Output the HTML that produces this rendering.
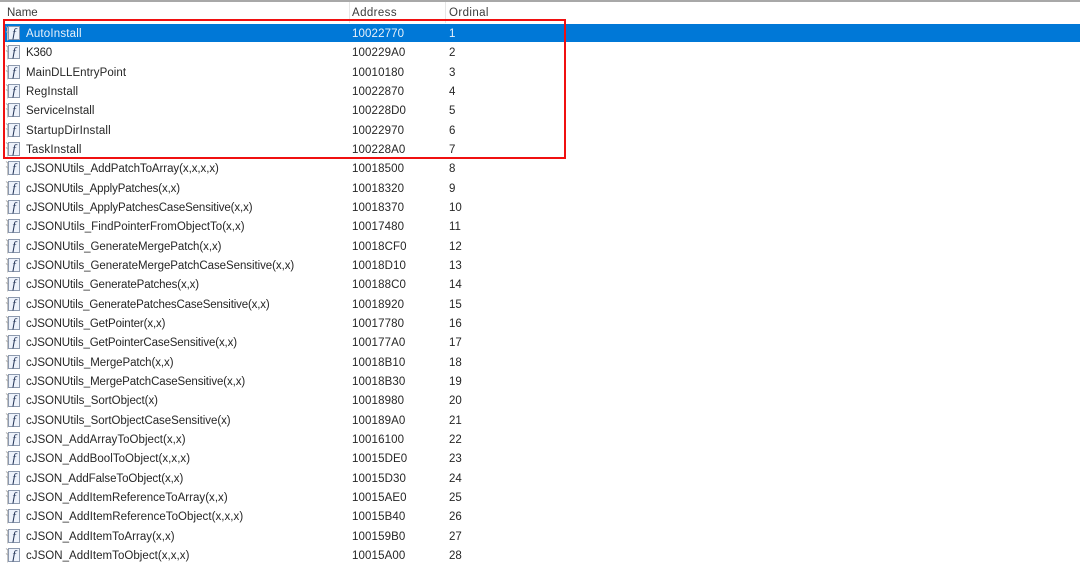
<!DOCTYPE html>
<html><head><meta charset="utf-8"><style>
html,body{margin:0;padding:0;background:#fff}
#p{position:relative;width:1080px;height:564px;overflow:hidden;background:#fff;font:11.5px/19px "Liberation Sans","Noto Sans CJK SC",sans-serif;color:#262626}
.top{position:absolute;left:0;top:0;width:1080px;height:2px;background:#a8a8a8}
.h{position:absolute;top:4px;color:#3a3a3a;white-space:nowrap;letter-spacing:.4px}
.v{position:absolute;top:2px;width:1px;height:21px;background:#e6e6e6}
.sel{position:absolute;left:3px;top:24px;width:1077px;height:18px;background:#0078d7}
.r{position:absolute;left:0;width:1080px;height:19px}
.r span{position:absolute;top:1px;white-space:nowrap}
.n{left:26px}.a{left:352px;letter-spacing:.12px}.o{left:449px}
.r svg{position:absolute;left:5px;top:1px}
.w span{color:#e8f2fb}
.box{position:absolute;left:3px;top:19px;width:559px;height:136px;border:2px solid #f01010}
</style></head><body><div id="p">
<svg width="0" height="0" style="position:absolute"><defs><g id="i"><path d="M2.5 2V15.5" stroke="#c4c4c4" fill="none"/><path d="M3 3L1 1.5M3 8L1 6.5" stroke="#aaa" fill="none"/><rect x="3.5" y="1.5" width="11" height="13" fill="#edf2fb" stroke="#8c99ae"/><text x="9" y="12" font-family="Liberation Serif" font-style="italic" font-size="13" text-anchor="middle" fill="#26375a">f</text></g></defs></svg>
<div class="top"></div>
<div class="h" style="left:7px;letter-spacing:0">Name</div><div class="h" style="left:352px">Address</div><div class="h" style="left:449px">Ordinal</div>
<div class="v" style="left:349px"></div><div class="v" style="left:445px"></div>
<div class="sel"></div>
<div class="r w" style="top:24px"><svg width="16" height="17"><use href="#i"/></svg><span class="n" style="letter-spacing:.18px">AutoInstall</span><span class="a">10022770</span><span class="o">1</span></div>
<div class="r" style="top:43px"><svg width="16" height="17"><use href="#i"/></svg><span class="n" style="letter-spacing:-.25px">K360</span><span class="a">100229A0</span><span class="o">2</span></div>
<div class="r" style="top:63px"><svg width="16" height="17"><use href="#i"/></svg><span class="n" style="letter-spacing:.06px">MainDLLEntryPoint</span><span class="a">10010180</span><span class="o">3</span></div>
<div class="r" style="top:82px"><svg width="16" height="17"><use href="#i"/></svg><span class="n" style="letter-spacing:.1px">RegInstall</span><span class="a">10022870</span><span class="o">4</span></div>
<div class="r" style="top:101px"><svg width="16" height="17"><use href="#i"/></svg><span class="n">ServiceInstall</span><span class="a">100228D0</span><span class="o">5</span></div>
<div class="r" style="top:121px"><svg width="16" height="17"><use href="#i"/></svg><span class="n" style="letter-spacing:.18px">StartupDirInstall</span><span class="a">10022970</span><span class="o">6</span></div>
<div class="r" style="top:140px"><svg width="16" height="17"><use href="#i"/></svg><span class="n" style="letter-spacing:.18px">TaskInstall</span><span class="a">100228A0</span><span class="o">7</span></div>
<div class="r" style="top:159px"><svg width="16" height="17"><use href="#i"/></svg><span class="n" style="letter-spacing:-.06px">cJSONUtils_AddPatchToArray(x,x,x,x)</span><span class="a">10018500</span><span class="o">8</span></div>
<div class="r" style="top:179px"><svg width="16" height="17"><use href="#i"/></svg><span class="n" style="letter-spacing:-.14px">cJSONUtils_ApplyPatches(x,x)</span><span class="a">10018320</span><span class="o">9</span></div>
<div class="r" style="top:198px"><svg width="16" height="17"><use href="#i"/></svg><span class="n" style="letter-spacing:-.12px">cJSONUtils_ApplyPatchesCaseSensitive(x,x)</span><span class="a">10018370</span><span class="o">10</span></div>
<div class="r" style="top:217px"><svg width="16" height="17"><use href="#i"/></svg><span class="n">cJSONUtils_FindPointerFromObjectTo(x,x)</span><span class="a">10017480</span><span class="o">11</span></div>
<div class="r" style="top:237px"><svg width="16" height="17"><use href="#i"/></svg><span class="n" style="letter-spacing:-.06px">cJSONUtils_GenerateMergePatch(x,x)</span><span class="a">10018CF0</span><span class="o">12</span></div>
<div class="r" style="top:256px"><svg width="16" height="17"><use href="#i"/></svg><span class="n" style="letter-spacing:-.06px">cJSONUtils_GenerateMergePatchCaseSensitive(x,x)</span><span class="a">10018D10</span><span class="o">13</span></div>
<div class="r" style="top:275px"><svg width="16" height="17"><use href="#i"/></svg><span class="n" style="letter-spacing:-.13px">cJSONUtils_GeneratePatches(x,x)</span><span class="a">100188C0</span><span class="o">14</span></div>
<div class="r" style="top:295px"><svg width="16" height="17"><use href="#i"/></svg><span class="n" style="letter-spacing:-.16px">cJSONUtils_GeneratePatchesCaseSensitive(x,x)</span><span class="a">10018920</span><span class="o">15</span></div>
<div class="r" style="top:314px"><svg width="16" height="17"><use href="#i"/></svg><span class="n" style="letter-spacing:-.12px">cJSONUtils_GetPointer(x,x)</span><span class="a">10017780</span><span class="o">16</span></div>
<div class="r" style="top:333px"><svg width="16" height="17"><use href="#i"/></svg><span class="n" style="letter-spacing:-.13px">cJSONUtils_GetPointerCaseSensitive(x,x)</span><span class="a">100177A0</span><span class="o">17</span></div>
<div class="r" style="top:353px"><svg width="16" height="17"><use href="#i"/></svg><span class="n" style="letter-spacing:-.08px">cJSONUtils_MergePatch(x,x)</span><span class="a">10018B10</span><span class="o">18</span></div>
<div class="r" style="top:372px"><svg width="16" height="17"><use href="#i"/></svg><span class="n" style="letter-spacing:-.1px">cJSONUtils_MergePatchCaseSensitive(x,x)</span><span class="a">10018B30</span><span class="o">19</span></div>
<div class="r" style="top:391px"><svg width="16" height="17"><use href="#i"/></svg><span class="n" style="letter-spacing:-.04px">cJSONUtils_SortObject(x)</span><span class="a">10018980</span><span class="o">20</span></div>
<div class="r" style="top:411px"><svg width="16" height="17"><use href="#i"/></svg><span class="n" style="letter-spacing:-.05px">cJSONUtils_SortObjectCaseSensitive(x)</span><span class="a">100189A0</span><span class="o">21</span></div>
<div class="r" style="top:430px"><svg width="16" height="17"><use href="#i"/></svg><span class="n" style="letter-spacing:.04px">cJSON_AddArrayToObject(x,x)</span><span class="a">10016100</span><span class="o">22</span></div>
<div class="r" style="top:449px"><svg width="16" height="17"><use href="#i"/></svg><span class="n" style="letter-spacing:.04px">cJSON_AddBoolToObject(x,x,x)</span><span class="a">10015DE0</span><span class="o">23</span></div>
<div class="r" style="top:469px"><svg width="16" height="17"><use href="#i"/></svg><span class="n" style="letter-spacing:-.07px">cJSON_AddFalseToObject(x,x)</span><span class="a">10015D30</span><span class="o">24</span></div>
<div class="r" style="top:488px"><svg width="16" height="17"><use href="#i"/></svg><span class="n" style="letter-spacing:.03px">cJSON_AddItemReferenceToArray(x,x)</span><span class="a">10015AE0</span><span class="o">25</span></div>
<div class="r" style="top:507px"><svg width="16" height="17"><use href="#i"/></svg><span class="n" style="letter-spacing:.05px">cJSON_AddItemReferenceToObject(x,x,x)</span><span class="a">10015B40</span><span class="o">26</span></div>
<div class="r" style="top:527px"><svg width="16" height="17"><use href="#i"/></svg><span class="n" style="letter-spacing:.04px">cJSON_AddItemToArray(x,x)</span><span class="a">100159B0</span><span class="o">27</span></div>
<div class="r" style="top:546px"><svg width="16" height="17"><use href="#i"/></svg><span class="n" style="letter-spacing:.04px">cJSON_AddItemToObject(x,x,x)</span><span class="a">10015A00</span><span class="o">28</span></div>
<div class="box"></div>
</div></body></html>
